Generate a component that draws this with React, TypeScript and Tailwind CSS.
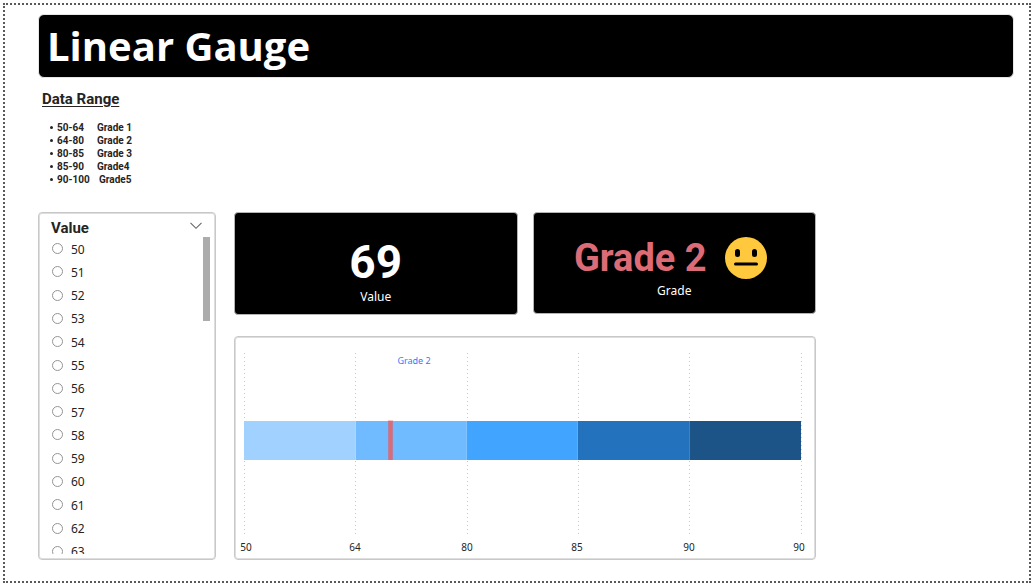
import { useState } from "react";

const ranges: [string, string][] = [
  ["50-64", "Grade 1"],
  ["64-80", "Grade 2"],
  ["80-85", "Grade 3"],
  ["85-90", "Grade4"],
  ["90-100", "Grade5"],
];

const values = Array.from({ length: 14 }, (_, i) => 50 + i);

const bands = [
  { x: 8, width: 112, fill: "#a0d1ff" },
  { x: 120, width: 111, fill: "#70bbff" },
  { x: 231, width: 111, fill: "#41a4ff" },
  { x: 342, width: 112, fill: "#2372bd" },
  { x: 454, width: 111, fill: "#1d5488" },
];

const gridLines = [8, 119, 231, 342, 453, 565];

const ticks = [
  { x: 10, label: "50" },
  { x: 119, label: "64" },
  { x: 231, label: "80" },
  { x: 341, label: "85" },
  { x: 453, label: "90" },
  { x: 563, label: "90" },
];

function DataRange() {
  return (
    <section className="h-[134px] pl-1 pt-[11px] font-['Roboto',sans-serif] font-bold text-[#252423]">
      <h2 className="text-[15px] leading-5 underline underline-offset-2">Data Range</h2>
      <ul className="pl-2 pt-3 text-[10px] leading-[13px]">
        {ranges.map(([range, grade]) => (
          <li key={range} className="flex items-center">
            <span className="mr-1 size-[3px] rounded-full bg-[#252423]" />
            <span className={range === "90-100" ? "w-[42px]" : "w-10"}>{range}</span>
            <span>{grade}</span>
          </li>
        ))}
      </ul>
    </section>
  );
}

function Slicer() {
  const [selected, setSelected] = useState<number | null>(null);
  return (
    <fieldset className="min-w-0 rounded border border-[#c8c8c8] p-px pb-1 shadow-[inset_0_0_0_1px_#dedede]">
      <div className="flex h-[23px] items-center justify-between pl-[11px] pr-3 pt-1">
        <span className="font-['Roboto',sans-serif] text-[15px] font-bold leading-5 text-[#252423]">Value</span>
        <button type="button" aria-label="Expand list" className="pb-1">
          <svg width="12" height="8" viewBox="0 0 12 8" fill="none" stroke="#666" strokeWidth="1.1">
            <path d="M0.5 0.8 6 6.3 11.5 0.8" />
          </svg>
        </button>
      </div>
      <div className="flex h-[317px] justify-between overflow-hidden pl-3 pr-1">
        <div className="grid h-[326px] auto-rows-fr">
          {values.map((v) => (
            <label key={v} className="flex items-center gap-2 text-xs text-[#252423]">
              <input
                type="radio"
                name="value"
                checked={selected === v}
                onChange={() => setSelected(v)}
                className="size-[11px] shrink-0 appearance-none rounded-full border border-[#949494] checked:border-4"
              />
              <span className="pt-[2px] leading-4">{v}</span>
            </label>
          ))}
        </div>
        <div className="h-[84px] w-[7px] bg-[#acacac]" />
      </div>
    </fieldset>
  );
}

function NeutralFace() {
  return (
    <svg width="42" height="42" viewBox="0 0 42 42" aria-hidden="true">
      <circle cx="21" cy="21" r="21" fill="#ffc83d" />
      <rect x="10" y="12" width="5" height="8" rx="2.5" fill="#000" />
      <rect x="27" y="12" width="5" height="8" rx="2.5" fill="#000" />
      <rect x="9" y="25.5" width="24" height="3" rx="1.5" fill="#000" />
    </svg>
  );
}

function Gauge() {
  return (
    <section className="rounded border border-[#c8c8c8] p-px shadow-[inset_0_0_0_1px_#dedede]">
      <svg viewBox="0 0 578 220" className="block h-auto w-full font-['Noto_Sans',sans-serif]" role="img">
        {gridLines.map((x) => (
          <line key={x} x1={x + 0.5} x2={x + 0.5} y1="15" y2="196" stroke="#c8c8c8" strokeDasharray="1 3" />
        ))}
        {bands.map((b) => (
          <rect key={b.x} x={b.x} y="83" width={b.width} height="39" fill={b.fill} />
        ))}
        {bands.slice(1).map((b) => (
          <line key={b.x} x1={b.x - 0.5} x2={b.x - 0.5} y1="83" y2="122" stroke="#fff" strokeOpacity="0.12" />
        ))}
        <rect x="152" y="82" width="5" height="40" fill="#d64550" fillOpacity="0.3" />
        <rect x="152.5" y="83" width="4" height="39" fill="#dc6b76" />
        <text x="178" y="26" textAnchor="middle" fontSize="9" fill="#1a83ff">
          Grade 2
        </text>
        {ticks.map((t) => (
          <text key={t.x} x={t.x} y="213" textAnchor="middle" fontSize="10" fill="#252423">
            {t.label}
          </text>
        ))}
      </svg>
    </section>
  );
}

export default function App() {
  return (
    <div className="bg-white px-[3px] pb-[2px] pt-[3px] font-['Noto_Sans',sans-serif]">
      <main className="border-2 border-dotted border-[#5a5a5a] pb-[21px] pl-[33px] pr-[15px] pt-[9px]">
        <header className="flex h-16 items-center rounded-md border border-[#e6e6e6] bg-black pl-2">
          <h1 className="font-['Open_Sans',sans-serif] text-[40px] font-bold leading-[60px] text-white">Linear Gauge</h1>
        </header>
        <DataRange />
        <div className="grid grid-cols-[178fr_582fr_180fr] gap-x-[18px]">
          <Slicer />
          <div className="flex flex-col gap-[21px]">
            <div className="grid grid-cols-2 gap-[15px]">
              <section className="flex h-[103px] flex-col items-center rounded border border-[#b4b4b4] bg-black pt-[23px] text-white">
                <p className="font-['Roboto',sans-serif] text-[46px] font-bold leading-[52px]">69</p>
                <p className="text-xs leading-[18px]">Value</p>
              </section>
              <section className="flex h-[102px] flex-col items-center rounded border border-[#b4b4b4] bg-black pt-[22px] text-white">
                <div className="flex h-[46px] items-center gap-[18px] pr-2">
                  <p className="font-['Roboto',sans-serif] text-[38px] font-bold leading-[46px] text-[#dc6b76]">Grade 2</p>
                  <NeutralFace />
                </div>
                <p className="pt-px text-xs leading-[18px]">Grade</p>
              </section>
            </div>
            <Gauge />
          </div>
        </div>
      </main>
    </div>
  );
}
